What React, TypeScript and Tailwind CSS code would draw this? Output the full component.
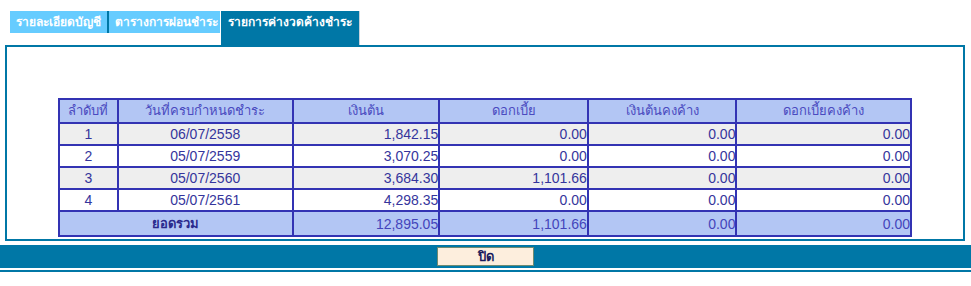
import React from "react";

interface Installment {
  no: number;
  due: string;
  principal: string;
  interest: string;
  principalLeft: string;
  interestLeft: string;
}

const rows: Installment[] = [
  { no: 1, due: "06/07/2558", principal: "1,842.15", interest: "0.00", principalLeft: "0.00", interestLeft: "0.00" },
  { no: 2, due: "05/07/2559", principal: "3,070.25", interest: "0.00", principalLeft: "0.00", interestLeft: "0.00" },
  { no: 3, due: "05/07/2560", principal: "3,684.30", interest: "1,101.66", principalLeft: "0.00", interestLeft: "0.00" },
  { no: 4, due: "05/07/2561", principal: "4,298.35", interest: "0.00", principalLeft: "0.00", interestLeft: "0.00" },
];

const headers = ["ลำดับที่", "วันที่ครบกำหนดชำระ", "เงินต้น", "ดอกเบี้ย", "เงินต้นคงค้าง", "ดอกเบี้ยคงค้าง"];
const widths = ["w-[59px]", "w-[175px]", "w-[147px]", "w-[149px]", "w-[149px]", "w-[175px]"];

export default function App() {
  return (
    <div className="w-[971px] h-[286px] bg-white font-['Liberation_Sans',Tahoma,sans-serif] text-[14px] pt-[11px]">
      {/* Tabs */}
      <div className="flex items-start h-[34px] ml-[10px] text-[12px] font-bold text-white whitespace-nowrap">
        <div className="h-[22px] w-[97px] bg-[#66ccff] pl-[6px] pt-[2px] leading-[18px] overflow-hidden">รายละเอียดบัญชี</div>
        <div className="h-[22px] w-[2px] bg-[#0077a6]" />
        <div className="h-[22px] w-[111px] bg-[#66ccff] pl-[6px] pt-[2px] leading-[18px] overflow-hidden">ตารางการผ่อนชำระ</div>
        <div className="h-[34px] w-[139px] ml-[1px] bg-[#0077a6] border-r border-[#c9d3dc] pl-[7px] pt-[2px] leading-[18px] overflow-hidden">
          รายการค่างวดค้างชำระ
        </div>
      </div>

      {/* Panel */}
      <div className="ml-[5px] w-[960px] h-[196px] border-2 border-[#0077a6] pt-[51px]">
        <table className="mx-auto w-[854px] border-collapse leading-[16px]">
          <thead>
            <tr className="h-[24px] bg-[#b3c6f4]">
              {headers.map((h, i) => (
                <th
                  key={h}
                  className={`${widths[i]} border-2 border-[#3333b3] p-0 font-normal text-[13px] text-[#4a4ac0] text-center`}
                >
                  {h}
                </th>
              ))}
            </tr>
          </thead>
          <tbody className="text-[#35359c]">
            {rows.map((r, i) => (
              <tr key={r.no} className={`h-[22px] ${i % 2 === 0 ? "bg-[#eeeeee]" : "bg-white"}`}>
                <td className="border-2 border-[#3333b3] p-0 text-center">{r.no}</td>
                <td className="border-2 border-[#3333b3] p-0 text-center">{r.due}</td>
                <td className="border-2 border-[#3333b3] p-0 text-right">{r.principal}</td>
                <td className="border-2 border-[#3333b3] p-0 text-right">{r.interest}</td>
                <td className="border-2 border-[#3333b3] p-0 text-right">{r.principalLeft}</td>
                <td className="border-2 border-[#3333b3] p-0 text-right">{r.interestLeft}</td>
              </tr>
            ))}
            <tr className="h-[25px] bg-[#b3c6f4] text-[#4444bb]">
              <td colSpan={2} className="border-2 border-[#3333b3] p-0 text-center text-[13px] font-bold text-[#2a2a8c]">
                ยอดรวม
              </td>
              <td className="border-2 border-[#3333b3] p-0 text-right">12,895.05</td>
              <td className="border-2 border-[#3333b3] p-0 text-right">1,101.66</td>
              <td className="border-2 border-[#3333b3] p-0 text-right">0.00</td>
              <td className="border-2 border-[#3333b3] p-0 text-right">0.00</td>
            </tr>
          </tbody>
        </table>
      </div>

      {/* Bottom bar */}
      <div className="mt-[4px] h-[23px] bg-[#0077a6] flex justify-center pt-[2px]">
        <button className="w-[97px] h-[19px] bg-[#fdeedd] border border-[#6f8a70] text-[13px] font-bold text-[#1a1a5c] leading-[16px]">
          ปิด
        </button>
      </div>
      <div className="mt-[2px] h-[2px] bg-[#0077a6]" />
    </div>
  );
}
